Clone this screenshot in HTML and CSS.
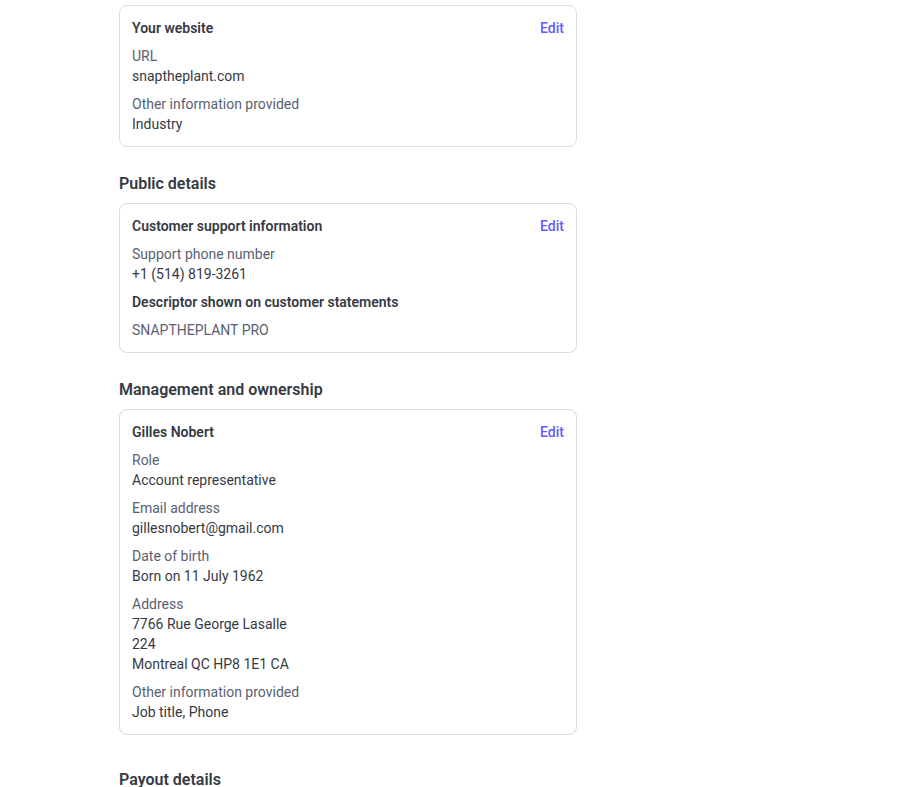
FILE: index.html
```html
<!DOCTYPE html>
<html lang="en">
<head>
<meta charset="utf-8">
<title>Account details</title>
<link rel="stylesheet" href="styles.css">
</head>
<body>
<main class="page">
  <section class="card">
    <div class="card-head">
      <span class="card-title">Your website</span>
      <a class="edit" href="#">Edit</a>
    </div>
    <div class="field">
      <div class="label">URL</div>
      <div class="value">snaptheplant.com</div>
    </div>
    <div class="field">
      <div class="label">Other information provided</div>
      <div class="value">Industry</div>
    </div>
  </section>

  <h2 class="section-title">Public details</h2>
  <section class="card">
    <div class="card-head">
      <span class="card-title">Customer support information</span>
      <a class="edit" href="#">Edit</a>
    </div>
    <div class="field">
      <div class="label">Support phone number</div>
      <div class="value">+1 (514) 819-3261</div>
    </div>
    <div class="field">
      <div class="card-title">Descriptor shown on customer statements</div>
    </div>
    <div class="field">
      <div class="label">SNAPTHEPLANT PRO</div>
    </div>
  </section>

  <h2 class="section-title">Management and ownership</h2>
  <section class="card">
    <div class="card-head">
      <span class="card-title">Gilles Nobert</span>
      <a class="edit" href="#">Edit</a>
    </div>
    <div class="field">
      <div class="label">Role</div>
      <div class="value">Account representative</div>
    </div>
    <div class="field">
      <div class="label">Email address</div>
      <div class="value">gillesnobert@gmail.com</div>
    </div>
    <div class="field">
      <div class="label">Date of birth</div>
      <div class="value">Born on 11 July 1962</div>
    </div>
    <div class="field">
      <div class="label">Address</div>
      <div class="value">7766 Rue George Lasalle</div>
      <div class="value">224</div>
      <div class="value">Montreal QC HP8 1E1 CA</div>
    </div>
    <div class="field">
      <div class="label">Other information provided</div>
      <div class="value">Job title, Phone</div>
    </div>
  </section>

  <h2 class="section-title section-title-lg">Payout details</h2>
</main>
</body>
</html>
```

FILE: styles.css
```css
* { box-sizing: border-box; }
html, body { margin: 0; padding: 0; background: #ffffff; }
body {
  font-family: Roboto, "Liberation Sans", Arial, sans-serif;
  font-size: 14px;
  line-height: 20px;
  color: #353a44;
}
.page {
  width: 458px;
  margin-left: 119px;
  padding-top: 5px;
}
.card {
  border: 1px solid #d8dce3;
  border-radius: 8px;
  padding: 12px;
  display: flex;
  flex-direction: column;
  gap: 8px;
}
.card-head {
  display: flex;
  justify-content: space-between;
  align-items: center;
}
.card-title {
  font-weight: 600;
  color: #353a44;
}
.edit {
  color: #635bff;
  text-decoration: none;
  font-weight: 500;
}
.label { color: #596171; }
.value { color: #353a44; }
.section-title {
  margin: 25px 0 7px 0;
  font-size: 16px;
  line-height: 24px;
  font-weight: 600;
  color: #353a44;
}
.section-title-lg { margin-top: 33px; }
```
